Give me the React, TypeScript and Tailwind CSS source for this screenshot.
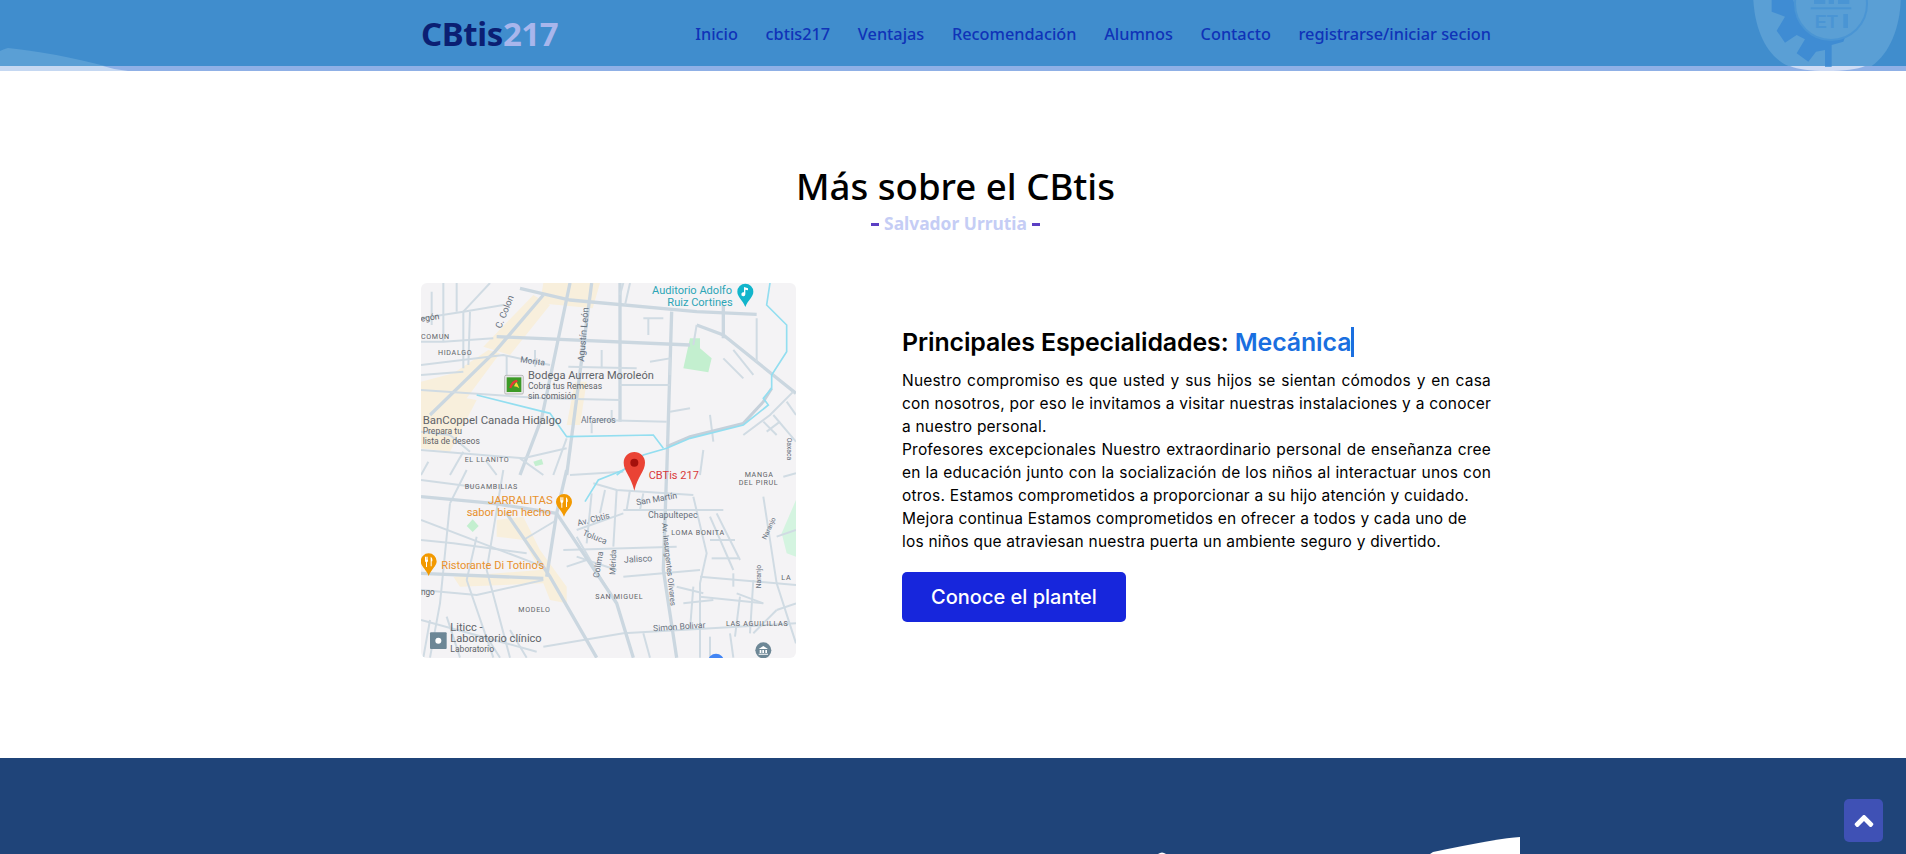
import React from "react";
import { FaAngleUp } from "react-icons/fa";

const navItems = ["Inicio", "cbtis217", "Ventajas", "Recomendación", "Alumnos", "Contacto", "registrarse/iniciar secion"];

const roadsTopMajor = [
  "545,24 470,600", "480,24 395,430 330,600", "60,420 255,230 400,60", "330,40 480,75 860,110 1040,118",
  "260,185 840,210", "860,150 940,180 1158,355", "630,24 630,440", "785,110 770,600", "940,90 940,190",
];
const roadsTopMinor = [
  "33,345 400,370 630,375", "560,435 770,440", "33,270 280,240 420,270", "160,110 160,280", "100,24 100,200",
  "330,550 400,600", "33,525 340,550 470,520", "1150,350 1080,420 1000,480", "1090,420 1158,500",
  "940,250 1000,310", "970,225 1030,300", "33,130 160,110 280,90", "240,24 160,110", "475,275 680,280",
  "715,130 715,180", "375,225 375,275", "575,225 575,280", "605,405 605,440", "545,440 545,475",
  "900,420 910,500", "880,525 870,600", "1040,130 1040,260", "720,260 780,250 780,300", "33,200 100,200 250,190",
  "33,470 120,480 180,530", "55,560 33,600", "640,24 630,60", "1070,470 1110,440",
  "65,50 65,150", "140,24 140,110", "290,240 290,340", "33,300 160,290", "180,110 175,270", "470,490 430,600",
  "660,24 645,90", "860,150 850,210", "630,330 780,330", "700,130 760,130", "1158,420 1130,380",
  "480,600 640,590", "1060,440 1100,480", "780,410 840,400", "120,600 160,530", "230,560 260,600",
];
const roadsBottomMajor = [
  "290,130 420,320 560,563", "470,0 440,130 410,320", "33,80 250,100 440,130", "440,130 620,400 670,563",
  "33,310 400,325", "770,0 760,300 800,563",
];
const roadsBottomMinor = [
  "640,120 940,120", "500,180 640,130", "500,200 570,320 620,400", "850,80 890,250 870,340 870,563",
  "870,320 1158,345", "1060,80 1100,340 1158,520", "460,240 800,230", "340,210 440,150", "33,360 200,375 400,330",
  "33,450 380,545", "33,150 400,290", "120,100 90,400 60,563", "280,0 230,300 300,563", "170,330 250,563",
  "1158,460 640,490 400,530", "550,40 620,60 850,75", "900,140 970,300", "900,210 975,210", "905,265 985,265",
  "980,370 1060,400", "990,380 975,500", "1030,330 1020,490", "545,70 530,220", "620,60 610,230",
  "500,260 620,300", "700,490 720,563", "900,500 900,563", "960,490 970,563", "1158,180 1100,200",
  "170,0 120,100", "33,210 130,220 350,250", "33,30 190,50", "800,350 880,370", "60,450 40,563",
  "470,290 530,270", "585,60 570,130", "660,60 650,120", "700,70 690,120", "920,130 990,270", "870,380 1060,400",
  "850,350 840,480", "970,310 970,350", "1120,20 1158,10", "200,200 170,330", "300,480 350,563", "230,500 270,563",
  "110,440 150,563", "640,320 870,300", "1100,420 1030,490", "1158,400 1100,420", "820,400 910,390",
];

function MapLabel({ x, y, size = 26, fill = "#5f6368", rotate, spacing, children }: { x: number; y: number; size?: number; fill?: string; rotate?: number; spacing?: number; children: React.ReactNode }) {
  return (
    <text x={x} y={y} fontSize={size * 1.07} fill={fill} letterSpacing={spacing} fontFamily="Roboto, sans-serif" transform={rotate ? `rotate(${rotate} ${x} ${y})` : undefined}>
      {children}
    </text>
  );
}

function Poi({ x, y, color }: { x: number; y: number; color: string }) {
  return (
    <g>
      <path d={`M${x - 24} ${y - 2} a24 24 0 1 1 48 0 c0 14 -16 24 -24 44 c-8 -20 -24 -30 -24 -44z`} fill={color} />
      <path d={`M${x - 11} ${y - 16} v12 q0 4 3 5 v14 h3 v-14 q3 -1 3 -5 v-12 h-2 v9 h-1 v-9 h-2 v9 h-1 v-9z M${x + 6} ${y - 16} q6 3 5 14 h-2 v15 h-3z`} fill="#fff" />
    </g>
  );
}

function CampusMap() {
  return (
    <svg viewBox="0 0 375 375" width="375" height="375" className="block">
      <rect width="375" height="375" fill="#f4f3f5" />
      <g transform="translate(-11 -8) scale(0.33333)">
        <path d="M400 24 L570 24 L548 100 L390 85Z" fill="#f8efdc" />
        <path d="M220 215 L370 60 L420 90 L300 240Z" fill="#f8efdc" />
        <path d="M33 320 L130 295 L235 225 L270 235 L170 370 L200 375 L120 530 L33 520Z" fill="#f8efdc" />
        <path d="M495 320 L530 320 L510 450 L470 450Z" fill="#f8efdc" />
        <path d="M840 190 L870 190 L870 220 L905 250 L895 292 L820 280Z" fill="#c3efcf" />
        <path d="M370 560 L395 552 L400 568 L376 574Z" fill="#c3efcf" />
        {roadsTopMajor.map((p) => <polyline key={p} points={p} fill="none" stroke="#cbd7e0" strokeWidth="10" />)}
        {roadsTopMinor.map((p) => <polyline key={p} points={p} fill="none" stroke="#d0dbe3" strokeWidth="6" />)}
        <polyline points="1085,340 1060,380 1000,445 840,485 770,515" fill="none" stroke="#c5d0da" strokeWidth="9" />
        <polyline points="1080,24 1070,90 1130,150 1130,230 1085,300 1085,340 1060,370 1075,390 1000,450 840,490 770,520 700,540 620,600" fill="none" stroke="#93def0" strokeWidth="5" />
        <polyline points="200,360 420,415 470,485 730,480 760,520" fill="none" stroke="#93def0" strokeWidth="5" />
        <MapLabel x={726} y={58} size={31} fill="#2ba5b5">Auditorio Adolfo</MapLabel>
        <MapLabel x={772} y={92} size={31} fill="#2ba5b5">Ruiz Cortines</MapLabel>
        <path d="M982 50 a24 24 0 1 1 48 0 c0 16 -16 24 -24 46 c-8 -22 -24 -30 -24 -46z" fill="#12b5cb" />
        <path d="M1002 36 l12 4 v6 l-8 -2 v14 a6 6 0 1 1 -4 -6z" fill="#fff" />
        <MapLabel x={33} y={140} size={24} rotate={-8}>egón</MapLabel>
        <MapLabel x={33} y={191} size={20} spacing={2}>COMUN</MapLabel>
        <MapLabel x={84} y={239} size={20} spacing={2}>HIDALGO</MapLabel>
        <MapLabel x={273} y={162} size={26} rotate={-68} fill="#68727e">C. Colon</MapLabel>
        <MapLabel x={522} y={260} size={26} rotate={-85} fill="#68727e">Agustín León</MapLabel>
        <MapLabel x={330} y={262} size={24} rotate={8} fill="#68727e">Morita</MapLabel>
        <rect x="284" y="301" width="56" height="56" rx="4" fill="#e8e8e8" stroke="#b9b9b9" strokeWidth="3" />
        <rect x="290" y="307" width="44" height="44" fill="#3c9a26" />
        <path d="M298 338 q6 -22 22 -24 l4 6 q-14 2 -20 20z" fill="#e53935" />
        <path d="M312 334 q4 -10 8 -12 l8 18 q-8 -6 -16 -6z" fill="#f4d83a" />
        <MapLabel x={354} y={311} size={31}>Bodega Aurrera Moroleón</MapLabel>
        <MapLabel x={354} y={343} size={24}>Cobra tus Remesas</MapLabel>
        <MapLabel x={354} y={372} size={24}>sin comisión</MapLabel>
        <MapLabel x={38} y={446} size={32}>BanCoppel Canada Hidalgo</MapLabel>
        <MapLabel x={38} y={476} size={24}>Prepara tu</MapLabel>
        <MapLabel x={38} y={506} size={24}>lista de deseos</MapLabel>
        <MapLabel x={513} y={444} size={24} fill="#68727e">Alfareros</MapLabel>
        <MapLabel x={164} y={562} size={20} spacing={2}>EL LLANITO</MapLabel>
        <MapLabel x={1132} y={488} size={19} rotate={90} fill="#68727e">Oaxaca</MapLabel>
      </g>
      <g transform="translate(-11 187) scale(0.33333)">
        <path d="M260 150 L340 140 L390 240 L470 350 L470 400 L420 390 L400 340 L150 350 L130 320 L390 300 L340 210 L260 200Z" fill="#f8efdc" />
        <path d="M1158 90 L1158 260 L1130 250 L1115 190Z" fill="#d4f4e0" />
        <path d="M188 148 L206 168 L188 186 L170 168Z" fill="#c3efcf" />
        {roadsBottomMinor.map((p) => <polyline key={p} points={p} fill="none" stroke="#d0dbe3" strokeWidth="6" />)}
        {roadsBottomMajor.map((p) => <polyline key={p} points={p} fill="none" stroke="#cbd7e0" strokeWidth="10" />)}
        <polyline points="640,0 565,30 525,95" fill="none" stroke="#93def0" strokeWidth="5" />
        <path d="M641 -22 a32 32 0 1 1 64 0 c0 26 -22 40 -32 84 c-10 -44 -32 -58 -32 -84z" fill="#ea4335" />
        <circle cx="673" cy="-22" r="12" fill="#a5100c" />
        <MapLabel x={716} y={28} size={31} fill="#d93a3a">CBTis 217</MapLabel>
        <MapLabel x={1004} y={20} size={20} spacing={2}>MANGA</MapLabel>
        <MapLabel x={986} y={44} size={20} spacing={2}>DEL PIRUL</MapLabel>
        <MapLabel x={164} y={58} size={20} spacing={2}>BUGAMBILIAS</MapLabel>
        <MapLabel x={234} y={102} size={32} fill="#e8912d">JARRALITAS</MapLabel>
        <MapLabel x={170} y={138} size={31} fill="#e8912d">sabor bien hecho</MapLabel>
        <Poi x={462} y={98} color="#f29900" />
        <MapLabel x={680} y={106} size={24} rotate={-10} fill="#68727e">San Martín</MapLabel>
        <MapLabel x={714} y={143} size={25} fill="#68727e">Chapultepec</MapLabel>
        <MapLabel x={504} y={168} size={24} rotate={-14} fill="#68727e">Av. Cbtis</MapLabel>
        <MapLabel x={516} y={195} size={24} rotate={22} fill="#68727e">Toluca</MapLabel>
        <MapLabel x={784} y={195} size={20} spacing={2}>LOMA BONITA</MapLabel>
        <MapLabel x={756} y={160} size={22} rotate={84} fill="#68727e">Av. Insurgentes Olivares</MapLabel>
        <MapLabel x={1068} y={210} size={19} rotate={-65} fill="#68727e">Naranjo</MapLabel>
        <MapLabel x={1052} y={355} size={19} rotate={-90} fill="#68727e">Naranjo</MapLabel>
        <MapLabel x={642} y={278} size={25} rotate={-3} fill="#68727e">Jalisco</MapLabel>
        <MapLabel x={566} y={325} size={24} rotate={-80} fill="#68727e">Colima</MapLabel>
        <MapLabel x={616} y={315} size={23} rotate={-88} fill="#68727e">Mérida</MapLabel>
        <Poi x={56} y={276} color="#f29900" />
        <MapLabel x={94} y={298} size={31} fill="#e8912d">Ristorante Di Totino's</MapLabel>
        <MapLabel x={33} y={376} size={23}>ngo</MapLabel>
        <MapLabel x={556} y={388} size={20} spacing={2}>SAN MIGUEL</MapLabel>
        <MapLabel x={325} y={426} size={20} spacing={2}>MODELO</MapLabel>
        <MapLabel x={1114} y={329} size={20} spacing={2}>LA</MapLabel>
        <MapLabel x={730} y={484} size={24} rotate={-4} fill="#68727e">Simon Bolivar</MapLabel>
        <MapLabel x={948} y={469} size={20} spacing={2}>LAS AGUILILLAS</MapLabel>
        <rect x="60" y="487" width="50" height="50" rx="3" fill="#6d8796" />
        <circle cx="85" cy="512" r="9" fill="#fff" />
        <MapLabel x={121} y={484} size={31}>Liticc -</MapLabel>
        <MapLabel x={121} y={517} size={31}>Laboratorio clínico</MapLabel>
        <MapLabel x={121} y={546} size={24}>Laboratorio</MapLabel>
        <circle cx="1060" cy="541" r="24" fill="#6d8796" />
        <path d="M1046 537 l14 -9 l14 9z M1049 540 h5 v9 h-5z M1057 540 h5 v9 h-5z M1066 540 h5 v9 h-5z M1046 551 h28 v3 h-28z" fill="#fff" />
        <circle cx="918" cy="575" r="24" fill="#4285f4" />
      </g>
    </svg>
  );
}

function Watermark() {
  return (
    <svg viewBox="0 0 528 222" width="176" height="74" className="absolute top-0 right-0 pointer-events-none">
      <path d="M70 0 C75 90 110 170 175 198 L425 198 C480 160 510 80 512 0Z" fill="#5a9fd5" />
      <path d="M180 198 Q215 213 290 213 Q370 213 405 198Z" fill="#cfdcf5" />
      <path d="M125 0 L125 35 L165 50 L140 92 L165 128 L200 105 L225 118 L200 160 L235 185 L258 155 L285 150 L285 200 L305 200 L305 135 L340 125 L350 100 L303 60 L200 40 L190 0Z" fill="#3f8cd3" />
      <circle cx="303" cy="12" r="108" fill="#5a9fd5" stroke="#4a95d4" strokeWidth="6" />
      <rect x="252" y="0" width="34" height="12" fill="#4a95d4" />
      <rect x="296" y="0" width="16" height="12" fill="#4a95d4" />
      <rect x="324" y="0" width="34" height="12" fill="#4a95d4" />
      <rect x="242" y="22" width="122" height="6" fill="#4a95d4" />
      <text x="254" y="84" fontSize="54" fontWeight="900" fill="#4a95d4" fontFamily="'Liberation Sans', sans-serif">ET</text>
      <rect x="340" y="42" width="14" height="42" fill="#4a95d4" />
    </svg>
  );
}

function LeftWave() {
  return (
    <svg viewBox="0 0 140 31" width="140" height="31" className="absolute left-0 bottom-[-5px] pointer-events-none">
      <path d="M0 11 Q4 9 8 8 Q50 12 105 26 L0 26Z" fill="#5a9fd5" />
      <path d="M0 26 L103 26 Q115 30 128 31 L0 31Z" fill="#c5d8f2" />
    </svg>
  );
}

const bodyLines: [string, boolean][] = [
  ["Nuestro compromiso es que usted y sus hijos se sientan cómodos y en casa", true],
  ["con nosotros, por eso le invitamos a visitar nuestras instalaciones y a conocer", true],
  ["a nuestro personal.", false],
  ["Profesores excepcionales Nuestro extraordinario personal de enseñanza cree", true],
  ["en la educación junto con la socialización de los niños al interactuar unos con", true],
  ["otros. Estamos comprometidos a proporcionar a su hijo atención y cuidado.", false],
  ["Mejora continua Estamos comprometidos en ofrecer a todos y cada uno de", false],
  ["los niños que atraviesan nuestra puerta un ambiente seguro y divertido.", false],
];

export default function App() {
  return (
    <div className="relative flex h-[854px] flex-col overflow-hidden bg-white">
      <header className="relative h-[71px] shrink-0 border-b-[5px] border-[#8fb0e6] bg-[#408dcd]">
        <LeftWave />
        <Watermark />
        <div className="relative ml-[421px] flex h-[66px] w-[1070px] items-center justify-between">
          <a className="font-['Noto_Sans',sans-serif] text-[33px] leading-none font-bold tracking-[-0.4px] text-[#0b1f73]">
            CBtis<span className="text-[#a8b6ec]">217</span>
          </a>
          <nav className="flex items-center gap-[27.7px] pt-[2px] font-['Noto_Sans',sans-serif] text-[16.3px] font-medium text-[#0f33b8]">
            {navItems.map((n) => (
              <a key={n} className="whitespace-nowrap">{n}</a>
            ))}
          </nav>
        </div>
      </header>

      <main className="flex-1">
        <div className="flex flex-col items-center pt-[90px] pl-[5px]">
          <h2 className="font-['Noto_Sans',sans-serif] text-[36.6px] leading-[50px] font-medium text-black">Más sobre el CBtis</h2>
          <p className="flex items-center gap-[5px] font-['Noto_Sans',sans-serif] text-[17.4px] leading-[24px] font-bold text-[#c5cdf5]">
            <span className="mt-[3px] h-[3px] w-[8px] bg-[#5b3fc4]" />
            Salvador Urrutia
            <span className="mt-[3px] h-[3px] w-[8px] bg-[#5b3fc4]" />
          </p>
        </div>

        <div className="mt-[48px] ml-[421px] flex w-[1070px] items-start gap-[106px]">
          <div className="h-[375px] w-[375px] shrink-0 overflow-hidden rounded-[6px]">
            <CampusMap />
          </div>
          <div className="w-[589px] pt-[41px] font-['Inter',sans-serif] text-black">
            <h3 className="text-[24.9px] leading-[36px] font-semibold tracking-[-0.1px]">
              Principales Especialidades: <span className="border-r-[3px] border-[#1a6fe0] text-[#1a6fe0]">Mecánica</span>
            </h3>
            <div className="mt-[9px] text-[15.5px] leading-[23px] tracking-[0.2px]">
              {bodyLines.map(([l, j]) => (
                <span key={l} className={j ? "block whitespace-nowrap [text-align-last:justify]" : "block whitespace-nowrap"}>{l}</span>
              ))}
            </div>
            <button className="mt-[19px] flex h-[50px] w-[224px] items-center justify-center rounded-[5px] bg-[#1726dc] text-[20px] font-medium text-white">
              Conoce el plantel
            </button>
          </div>
        </div>
      </main>

      <footer className="relative h-[96px] shrink-0 bg-[#1f4479]">
        <svg viewBox="0 0 450 20" width="450" height="20" className="absolute bottom-0 left-[1100px]">
          <path d="M333 18 Q400 4 420 3 L420 20 L330 20Z" fill="#fff" />
          <path d="M58 20 Q62 17 66 20Z" fill="#fff" />
        </svg>
      </footer>

      <button className="absolute right-[23px] bottom-[12px] flex h-[43px] w-[39px] items-center justify-center rounded-[5px] bg-[#3f51b5] text-white">
        <FaAngleUp size={30} />
      </button>
    </div>
  );
}
